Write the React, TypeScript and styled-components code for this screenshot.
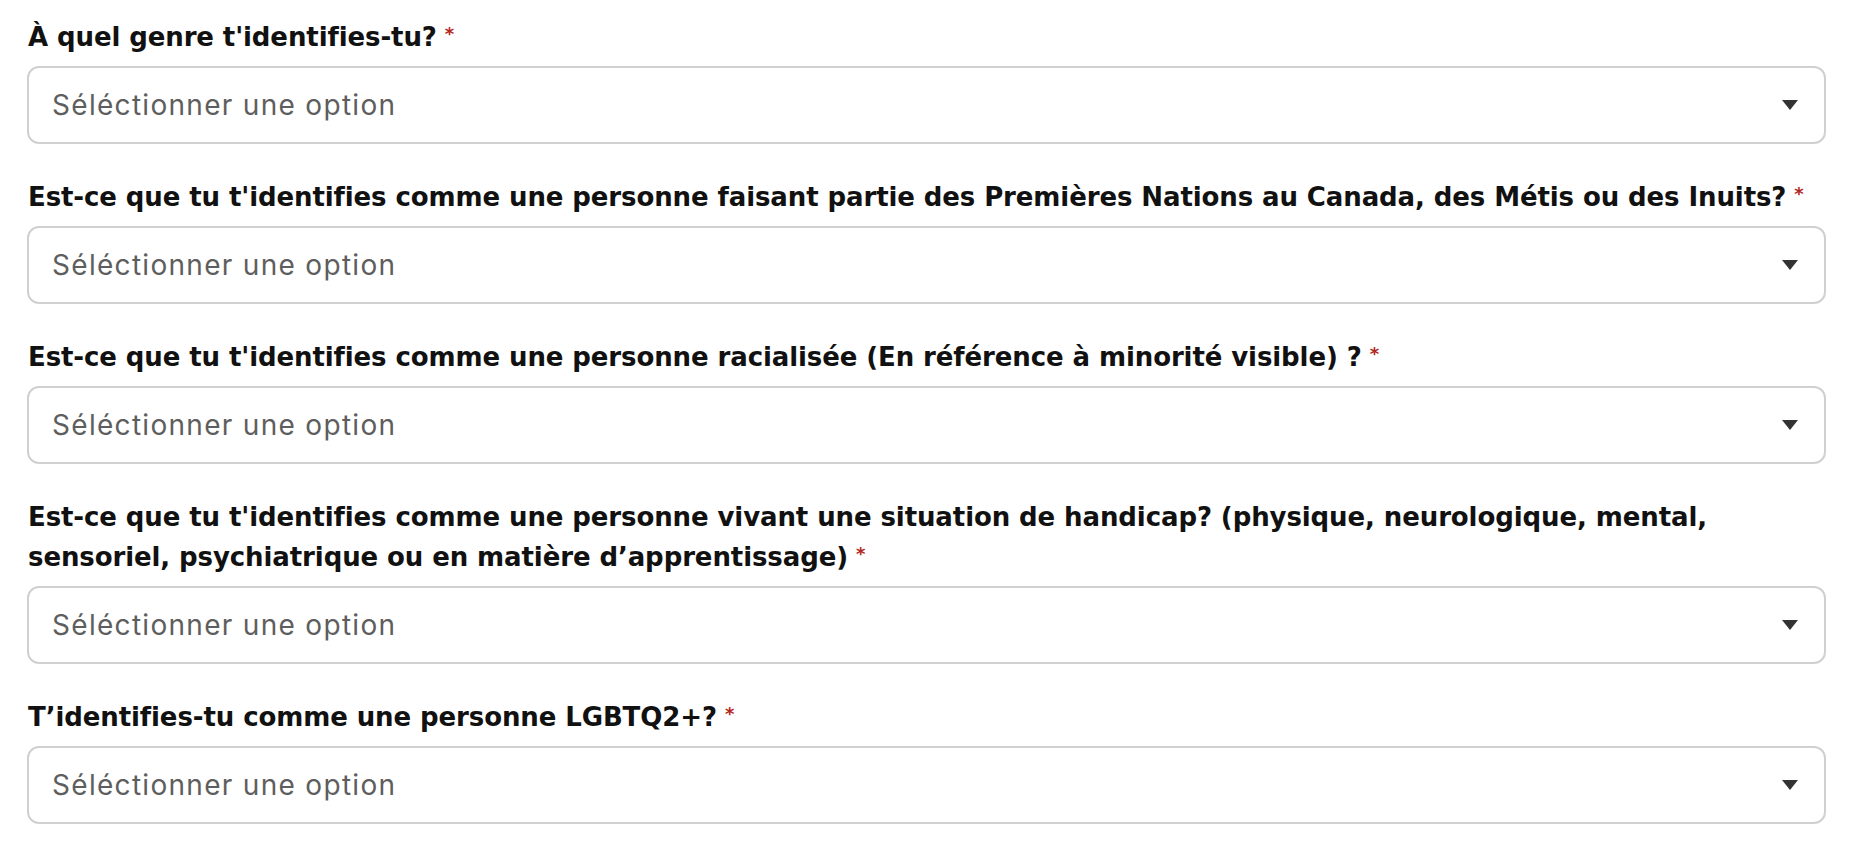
import React from "react";
import styled, { createGlobalStyle } from "styled-components";

const Global = createGlobalStyle`
  html, body { margin: 0; padding: 0; background: #ffffff; }
  body { font-family: "Inter", "Noto Sans", sans-serif; color: #111; }
`;

const Page = styled.div`
  padding: 17px 32px 0 27px;
  display: flex;
  flex-direction: column;
  gap: 33px;
`;

const Field = styled.div`
  display: flex;
  flex-direction: column;
  gap: 9px;
`;

const Label = styled.label`
  font-family: "DejaVu Sans", "Noto Sans", sans-serif;
  font-weight: 700;
  font-size: 26px;
  line-height: 40px;
  letter-spacing: -0.1px;
  color: #111;
  padding-left: 1px;
`;

const Required = styled.span`
  color: #b3261e;
  font-size: 18px;
  line-height: 1;
  vertical-align: 6px;
  margin-left: 8px;
`;

const SelectBox = styled.div`
  box-sizing: border-box;
  height: 78px;
  border: 2px solid #d0d0d0;
  border-radius: 12px;
  display: flex;
  align-items: center;
  justify-content: space-between;
  padding: 0 26px 0 23px;
`;

const Placeholder = styled.span`
  font-family: "Inter", "Noto Sans", sans-serif;
  font-weight: 400;
  font-size: 28px;
  letter-spacing: 1.3px;
  color: #5e5e5e;
`;

const Caret = styled.svg`
  width: 16px;
  height: 10px;
  flex: none;
`;

const questions = [
  "À quel genre t'identifies-tu?",
  "Est-ce que tu t'identifies comme une personne faisant partie des Premières Nations au Canada, des Métis ou des Inuits?",
  "Est-ce que tu t'identifies comme une personne racialisée (En référence à minorité visible) ?",
  "Est-ce que tu t'identifies comme une personne vivant une situation de handicap? (physique, neurologique, mental, sensoriel, psychiatrique ou en matière d’apprentissage)",
  "T’identifies-tu comme une personne LGBTQ2+?",
];

export default function App() {
  return (
    <>
      <Global />
      <Page>
        {questions.map((q) => (
          <Field key={q}>
            <Label>
              {q}
              <Required>*</Required>
            </Label>
            <SelectBox>
              <Placeholder>Séléctionner une option</Placeholder>
              <Caret viewBox="0 0 16 10">
                <path d="M0 0 H16 L8 10 Z" fill="#333" />
              </Caret>
            </SelectBox>
          </Field>
        ))}
      </Page>
    </>
  );
}
